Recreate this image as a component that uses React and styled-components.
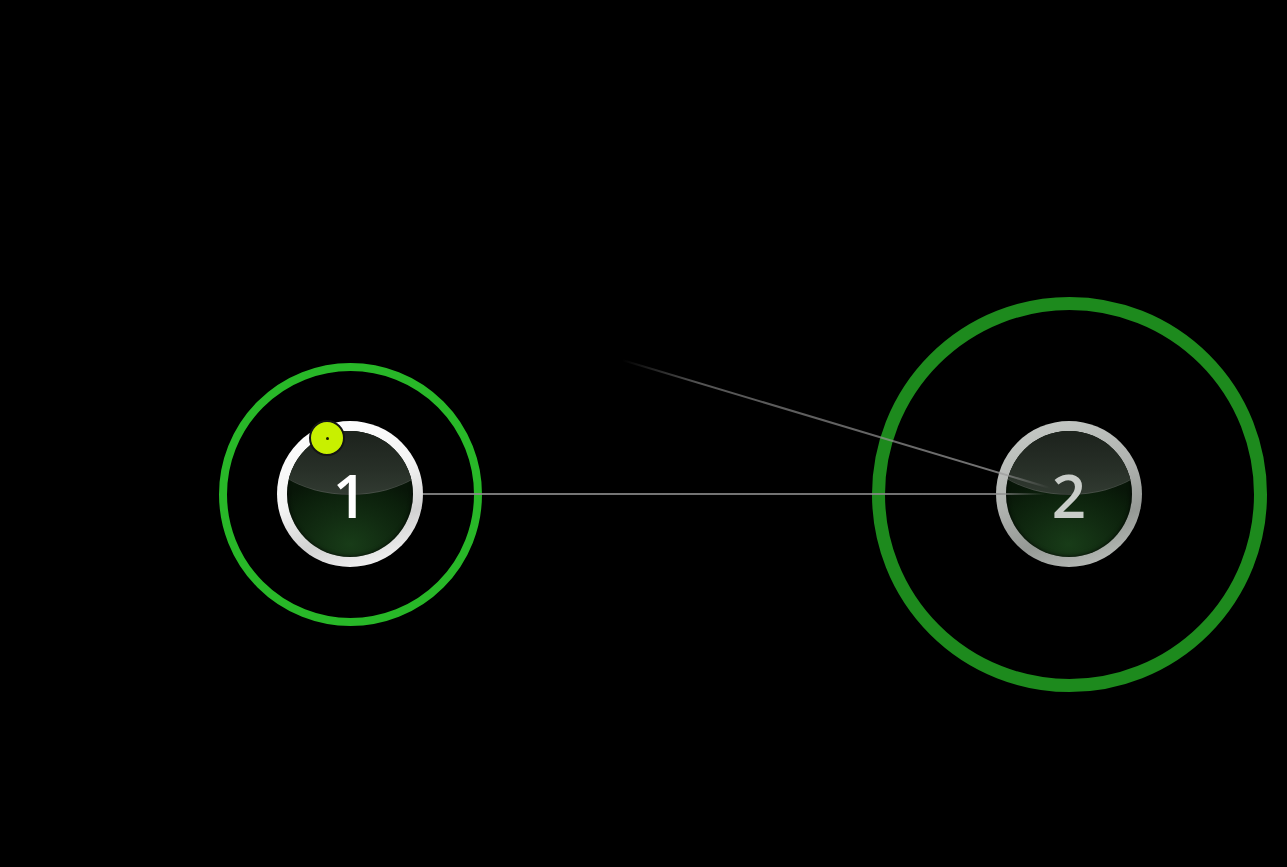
import React from "react";
import styled, { createGlobalStyle } from "styled-components";

const GlobalStyle = createGlobalStyle`
  html, body { margin: 0; padding: 0; background: #000; }
  #root { width: 100vw; height: 100vh; }
`;

const Stage = styled.div`
  position: relative;
  width: 100%;
  height: 100%;
  background: #000;
  overflow: hidden;
  font-family: "Open Sans", "DejaVu Sans", sans-serif;
`;

const Range = styled.div`
  position: absolute;
  box-sizing: border-box;
  border-radius: 50%;
  width: ${(p) => p.$size}px;
  height: ${(p) => p.$size}px;
  left: ${(p) => p.$cx - p.$size / 2}px;
  top: ${(p) => p.$cy - p.$size / 2}px;
  border: ${(p) => p.$stroke}px solid ${(p) => p.$color};
`;

const Node = styled.div`
  position: absolute;
  width: 146px;
  height: 146px;
  left: ${(p) => p.$cx - 73}px;
  top: ${(p) => p.$cy - 73}px;
  border-radius: 50%;
  background: ${(p) =>
    p.$active
      ? "linear-gradient(160deg, #ffffff 0%, #f4f4f4 45%, #d2d2d2 70%, #ffffff 100%)"
      : "linear-gradient(160deg, #c8ccc8 0%, #b0b3b0 45%, #959995 70%, #c4c8c4 100%)"};
  box-shadow: 0 0 2px rgba(0, 0, 0, 0.8);
`;

const Disc = styled.div`
  position: absolute;
  inset: 10px;
  border-radius: 50%;
  overflow: hidden;
  background: radial-gradient(ellipse 70% 55% at 50% 90%, #183c18 0%, #112b11 45%, #0b1f0b 80%, #081608 100%);
  box-shadow: inset 0 0 4px rgba(0, 0, 0, 0.9);
  display: flex;
  align-items: center;
  justify-content: center;

  &::before {
    content: "";
    position: absolute;
    left: -25%;
    width: 150%;
    top: -50%;
    height: 100%;
    border-radius: 50%;
    background: linear-gradient(to bottom, #1e241e 55%, #283028 82%, #313a31 100%);
    border-bottom: 1px solid rgba(255, 255, 255, 0.1);
  }
`;

const Label = styled.span`
  position: relative;
  font-size: 60px;
  font-weight: 600;
  line-height: 1;
  margin-top: 2px;
  color: ${(p) => (p.$active ? "#ffffff" : "#c9cdc9")};
`;

const Handle = styled.div`
  position: absolute;
  box-sizing: border-box;
  width: 36px;
  height: 36px;
  left: ${(p) => p.$cx - 18}px;
  top: ${(p) => p.$cy - 18}px;
  border-radius: 50%;
  background: #c8f000;
  border: 2px solid #141414;
  display: flex;
  align-items: center;
  justify-content: center;

  &::after {
    content: "";
    width: 3px;
    height: 3px;
    border-radius: 50%;
    background: #1a1a00;
  }
`;

const Links = styled.svg`
  position: absolute;
  left: 0;
  top: 0;
  width: 100%;
  height: 100%;
  pointer-events: none;
`;

const nodes = [
  { id: 1, cx: 350, cy: 494, range: 263, stroke: 8, color: "#28b828", active: true },
  { id: 2, cx: 1069, cy: 494, range: 395, stroke: 13, color: "#1d8a1d", active: false },
];

export default function App() {
  return (
    <>
      <GlobalStyle />
      <Stage>
        {nodes.map((n) => (
          <Range key={`r${n.id}`} $cx={n.cx} $cy={n.cy} $size={n.range} $stroke={n.stroke} $color={n.color} />
        ))}
        {nodes.map((n) => (
          <Node key={`n${n.id}`} $cx={n.cx} $cy={n.cy} $active={n.active}>
            <Disc>
              <Label $active={n.active}>{n.id}</Label>
            </Disc>
          </Node>
        ))}
        <Links viewBox="0 0 1287 867" preserveAspectRatio="none">
          <defs>
            <linearGradient id="hline" gradientUnits="userSpaceOnUse" x1="423" y1="0" x2="1045" y2="0">
              <stop offset="0" stopColor="#8c8c8c" stopOpacity="0.85" />
              <stop offset="0.92" stopColor="#8c8c8c" stopOpacity="0.8" />
              <stop offset="1" stopColor="#8c8c8c" stopOpacity="0" />
            </linearGradient>
            <linearGradient id="dline" gradientUnits="userSpaceOnUse" x1="622" y1="360" x2="1050" y2="488">
              <stop offset="0" stopColor="#8c8c8c" stopOpacity="0" />
              <stop offset="0.18" stopColor="#8c8c8c" stopOpacity="0.6" />
              <stop offset="0.88" stopColor="#9a9a9a" stopOpacity="0.75" />
              <stop offset="1" stopColor="#9a9a9a" stopOpacity="0" />
            </linearGradient>
          </defs>
          <line x1="423" y1="494" x2="1045" y2="494" stroke="url(#hline)" strokeWidth="2" />
          <line x1="622" y1="360" x2="1050" y2="488" stroke="url(#dline)" strokeWidth="2" />
        </Links>
        <Handle $cx={327} $cy={438} />
      </Stage>
    </>
  );
}
